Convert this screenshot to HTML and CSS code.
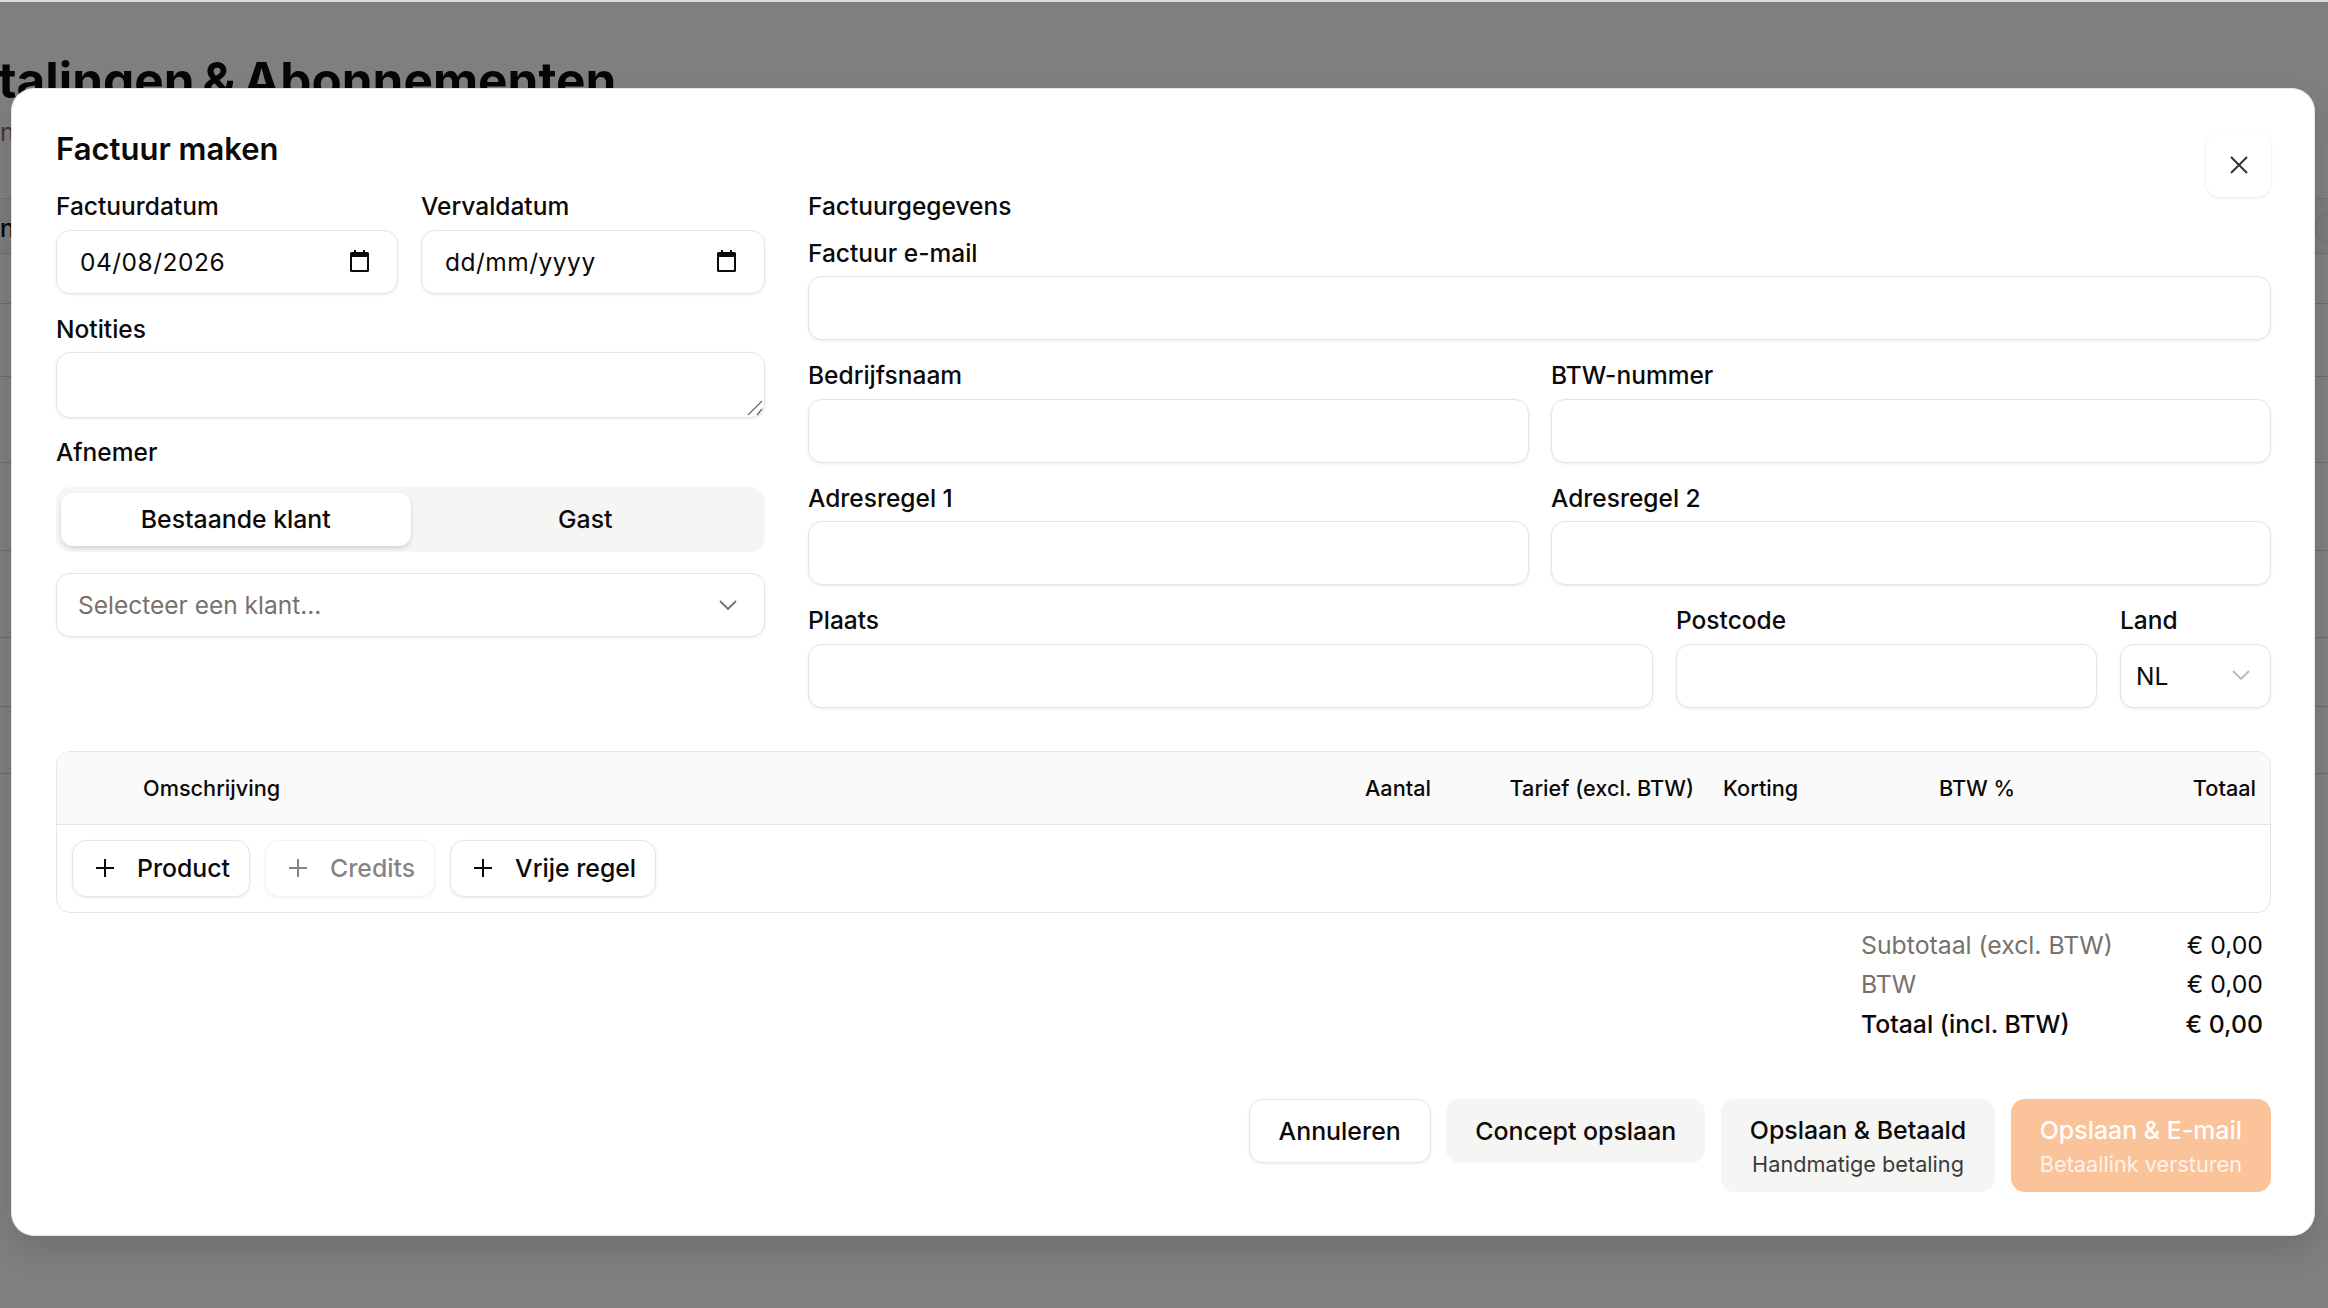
FILE: index.html
```html
<!DOCTYPE html>
<html lang="nl">
<head>
<meta charset="utf-8">
<title>Factuur maken</title>
<link rel="stylesheet" href="styles.css">
</head>
<body>
<div class="topstrip"></div>
<main class="page">
  <h1 class="page-title">Betalingen &amp; Abonnementen</h1>
  <p class="page-sub">n</p>
  <div class="page-table">
    <div class="page-row page-row-head"><span>n</span><span class="pill"></span></div>
    <div class="page-row"></div>
    <div class="page-row"></div>
    <div class="page-row"></div>
    <div class="page-row"></div>
    <div class="page-row"></div>
    <div class="page-row"></div>
    <div class="page-row"></div>
  </div>
</main>
<div class="overlay">
  <section class="modal">
    <button class="close" type="button" aria-label="Sluiten">
      <svg class="close-icon" viewBox="0 0 18 18"><path d="M1 1l16 16M17 1 1 17"/></svg>
    </button>
    <h2 class="modal-title">Factuur maken</h2>
    <div class="columns">
      <div class="col-left">
        <div class="row-dates">
          <div class="field">
            <label class="label">Factuurdatum</label>
            <div class="input input-date">
              <span>04/08/2026</span>
              <svg class="cal" viewBox="0 0 19 22"><path d="M4 0h2v2h7V0h2v2h2.500a1.500 1.500 0 0 1 1.500 1.500v17a1.500 1.500 0 0 1-1.500 1.500h-16A1.500 1.500 0 0 1 0 20.500v-17A1.500 1.500 0 0 1 1.500 2H4zM2 7v13h15V7z"/></svg>
            </div>
          </div>
          <div class="field">
            <label class="label">Vervaldatum</label>
            <div class="input input-date">
              <span>dd/mm/yyyy</span>
              <svg class="cal" viewBox="0 0 19 22"><path d="M4 0h2v2h7V0h2v2h2.500a1.500 1.500 0 0 1 1.500 1.500v17a1.500 1.500 0 0 1-1.500 1.500h-16A1.500 1.500 0 0 1 0 20.500v-17A1.500 1.500 0 0 1 1.500 2H4zM2 7v13h15V7z"/></svg>
            </div>
          </div>
        </div>
        <div class="field">
          <label class="label">Notities</label>
          <div class="textarea-wrap">
            <div class="input textarea"></div>
            <svg class="grip" viewBox="0 0 16 16"><path d="M1 15 15 1M10 15l5-6"/></svg>
          </div>
        </div>
        <div class="field-afnemer">
          <label class="label">Afnemer</label>
          <div class="toggle">
            <span class="tab tab-active">Bestaande klant</span>
            <span class="tab">Gast</span>
          </div>
          <div class="input input-select">
            <span class="placeholder">Selecteer een klant...</span>
            <svg class="chev" viewBox="0 0 18 10"><path d="M1 1l8 8 8-8"/></svg>
          </div>
        </div>
      </div>
      <div class="col-right">
        <div class="label label-head">Factuurgegevens</div>
        <div class="field">
          <label class="label">Factuur e-mail</label>
          <div class="input"></div>
        </div>
        <div class="row-two">
          <div class="field"><label class="label">Bedrijfsnaam</label><div class="input"></div></div>
          <div class="field"><label class="label">BTW-nummer</label><div class="input"></div></div>
        </div>
        <div class="row-two">
          <div class="field"><label class="label">Adresregel 1</label><div class="input"></div></div>
          <div class="field"><label class="label">Adresregel 2</label><div class="input"></div></div>
        </div>
        <div class="row-city">
          <div class="field"><label class="label">Plaats</label><div class="input"></div></div>
          <div class="field"><label class="label">Postcode</label><div class="input"></div></div>
          <div class="field">
            <label class="label">Land</label>
            <div class="input input-land">
              <span>NL</span>
              <svg class="chev chev-light" viewBox="0 0 18 10"><path d="M1 1l8 8 8-8"/></svg>
            </div>
          </div>
        </div>
      </div>
    </div>
    <div class="lines">
      <div class="lines-head">
        <span class="th-desc">Omschrijving</span>
        <span class="th-end">Aantal</span>
        <span class="th-end">Tarief (excl. BTW)</span>
        <span class="th-korting">Korting</span>
        <span class="th-center">BTW %</span>
        <span class="th-end">Totaal</span>
      </div>
      <div class="lines-actions">
        <button class="add" type="button"><svg class="plus" viewBox="0 0 20 20"><path d="M10 1v18M1 10h18"/></svg>Product</button>
        <button class="add add-disabled" type="button"><svg class="plus" viewBox="0 0 20 20"><path d="M10 1v18M1 10h18"/></svg>Credits</button>
        <button class="add" type="button"><svg class="plus" viewBox="0 0 20 20"><path d="M10 1v18M1 10h18"/></svg>Vrije regel</button>
      </div>
    </div>
    <div class="totals">
      <div class="total-row muted"><span>Subtotaal (excl. BTW)</span><span class="val">€ 0,00</span></div>
      <div class="total-row muted"><span>BTW</span><span class="val">€ 0,00</span></div>
      <div class="total-row strong"><span>Totaal (incl. BTW)</span><span>€ 0,00</span></div>
    </div>
    <div class="footer">
      <button class="btn btn-outline" type="button">Annuleren</button>
      <button class="btn btn-soft" type="button">Concept opslaan</button>
      <button class="btn btn-soft btn-stack" type="button"><span>Opslaan &amp; Betaald</span><small>Handmatige betaling</small></button>
      <button class="btn btn-primary btn-stack" type="button"><span>Opslaan &amp; E-mail</span><small>Betaallink versturen</small></button>
    </div>
  </section>
</div>
</body>
</html>
```
FILE: styles.css
```css
* { box-sizing: border-box; }
html, body { margin: 0; padding: 0; }
body {
  width: 2328px;
  height: 1308px;
  overflow: hidden;
  position: relative;
  background: #fff;
  color: #0c0a09;
  font-family: Inter, "Liberation Sans", sans-serif;
  font-optical-sizing: none;
}
.topstrip { height: 2px; background: #d9d9e6; }

/* page behind the dialog */
.page { padding-top: 50px; }
.page-title {
  margin: 0 0 0 -64px;
  font-size: 49.500px;
  line-height: 56px;
  font-weight: 700;
  word-spacing: -4px;
  white-space: nowrap;
}
.page-sub { margin: 8px 0 0; font-size: 24.500px; line-height: 32px; color: #78716c; }
.page-table {
  margin-top: 50px;
  display: grid;
  grid-template-rows: 56px 50px 73px 86px 88px 87px 69px 67px;
}
.page-row { border-bottom: 1px solid #d8d8d8; position: relative; }
.page-row-head {
  background: #f7f7f7;
  border-top: 1px solid #e5e5e5;
  font-size: 24.500px;
  font-weight: 500;
  line-height: 58px;
}
.pill {
  position: absolute;
  left: 2315px;
  top: 13px;
  width: 120px;
  height: 32px;
  border: 1.500px solid #dedede;
  border-radius: 16px;
}

/* overlay and dialog */
.overlay {
  position: absolute;
  inset: 2px 0 0;
  background: rgba(0, 0, 0, .5);
  padding: 86px 0 0 11px;
}
.modal {
  position: relative;
  width: 2304px;
  height: 1148px;
  background: #fff;
  border-radius: 23px;
  padding: 0 43px 0 44px;
  box-shadow: 0 15px 30px rgba(0, 0, 0, .12);
  border: 1px solid #e5e5e5;
}
.close {
  position: absolute;
  top: 43px;
  right: 43px;
  width: 65px;
  height: 65px;
  border: 0;
  border-radius: 14px;
  background: #fff;
  box-shadow: 0 1px 3px rgba(0, 0, 0, .1);
  display: flex;
  align-items: center;
  justify-content: center;
  padding: 0;
}
.close-icon { width: 18px; height: 18px; fill: none; stroke: #333; stroke-width: 2; }
.modal-title {
  margin: 0;
  padding-top: 41px;
  font-size: 31px;
  line-height: 38px;
  font-weight: 600;
}

.columns {
  display: grid;
  grid-template-columns: 709px 1463px;
  column-gap: 43px;
  margin-top: 24px;
}
.col-left { display: flex; flex-direction: column; gap: 21px; }
.col-right { display: flex; flex-direction: column; gap: 21px; }
.row-dates { display: grid; grid-template-columns: 342px 344px; column-gap: 23px; }
.row-two { display: grid; grid-template-columns: 721px 720px; column-gap: 22px; }
.row-city { display: grid; grid-template-columns: 845px 421px 151px; column-gap: 23px; }
.field { display: flex; flex-direction: column; gap: 9.500px; }
.label {
  display: block;
  font-size: 24.500px;
  line-height: 28px;
  font-weight: 500;
  color: #0c0a09;
}
.label-head { margin-bottom: -2.500px; }
.input {
  display: flex;
  align-items: center;
  height: 64px;
  width: 100%;
  border: 1px solid #e7e5e4;
  border-radius: 14px;
  background: #fff;
  box-shadow: 0 1px 3px rgba(0, 0, 0, .08);
  font-family: inherit;
  font-size: 24.500px;
}
.input-date { justify-content: space-between; padding: 1px 28px 0 23px; letter-spacing: .5px; }
.cal { width: 19px; height: 22px; fill: #0a0a0a; margin-top: -3px; }
.textarea-wrap { position: relative; }
.textarea { height: 66px; }
.grip {
  position: absolute;
  right: 2px;
  bottom: 2px;
  width: 16px;
  height: 16px;
  fill: none;
  stroke: #666;
  stroke-width: 1.200;
}
.field-afnemer { display: flex; flex-direction: column; margin-top: -1px; }
.toggle {
  margin-top: 21px;
  height: 65px;
  padding: 6px 5px;
  border-radius: 15px;
  background: #f5f5f4;
  display: grid;
  grid-template-columns: 349.500px 349.500px;
}
.tab {
  display: flex;
  align-items: center;
  justify-content: center;
  border-radius: 12px;
  padding-bottom: 2px;
  font-size: 24.800px;
  font-weight: 500;
}
.tab-active { background: #fff; box-shadow: 0 2px 4px rgba(0, 0, 0, .14); }
.input-select { margin-top: 21px; justify-content: space-between; padding: 0 27px 0 21px; }
.placeholder { color: #78716c; }
.chev { width: 18px; height: 10px; fill: none; stroke: #78716c; stroke-width: 1.800; }
.chev-light { stroke: #b8b8b8; }
.input-land { justify-content: space-between; padding: 0 20px 0 15px; }
.input-land .chev { margin-top: -2px; }

/* line items */
.lines {
  margin-top: 43.500px;
  height: 161.500px;
  border: 1px solid #e7e5e4;
  border-radius: 14px;
  overflow: hidden;
}
.lines-head {
  height: 73px;
  background: #fafafa;
  border-bottom: 1px solid #e7e5e4;
  display: grid;
  grid-template-columns: 1188px 100px 263px 177px 212px 173px;
  padding: 0 14px 0 86px;
  align-items: center;
  font-size: 21.700px;
  font-weight: 500;
}
.th-end { text-align: right; }
.th-korting { padding-left: 29px; }
.th-center { text-align: center; }
.lines-actions { display: flex; gap: 15px; padding: 14.500px 15px 0; }
.add {
  display: flex;
  align-items: center;
  height: 57px;
  padding: 0 19px 0 22px;
  gap: 22px;
  border: 1px solid #e7e5e4;
  border-radius: 14px;
  background: #fff;
  box-shadow: 0 1px 3px rgba(0, 0, 0, .08);
  color: #0c0a09;
  font-family: inherit;
  font-size: 24.800px;
  font-weight: 500;
}
.add-disabled { opacity: .5; }
.plus { width: 20px; height: 20px; fill: none; stroke: currentColor; stroke-width: 2; }

/* totals */
.totals {
  margin-top: 13px;
  margin-left: auto;
  width: 402px;
  margin-right: 8px;
  font-size: 24.800px;
}
.total-row { display: flex; justify-content: space-between; height: 39.500px; line-height: 39.500px; }
.muted { color: #78716c; }
.val { color: #0c0a09; }
.strong { font-weight: 500; }

/* footer */
.footer {
  margin-top: 55px;
  display: flex;
  justify-content: flex-end;
  align-items: flex-start;
  gap: 15.500px;
}
.btn {
  min-height: 64px;
  border-radius: 14px;
  border: 0;
  font-family: inherit;
  font-size: 24.900px;
  font-weight: 500;
  color: #0c0a09;
  padding: 0 29px;
}
.btn-outline {
  border: 1px solid #e7e5e4;
  background: #fff;
  box-shadow: 0 1px 3px rgba(0, 0, 0, .08);
}
.btn-soft { background: #f5f5f4; }
.btn-stack {
  height: 93px;
  display: flex;
  flex-direction: column;
  align-items: center;
  justify-content: center;
  gap: 6px;
}
.btn-stack small { font-size: 21.700px; font-weight: 400; opacity: .8; }
.btn-primary { background: #fbc399; color: #fff; }
```
